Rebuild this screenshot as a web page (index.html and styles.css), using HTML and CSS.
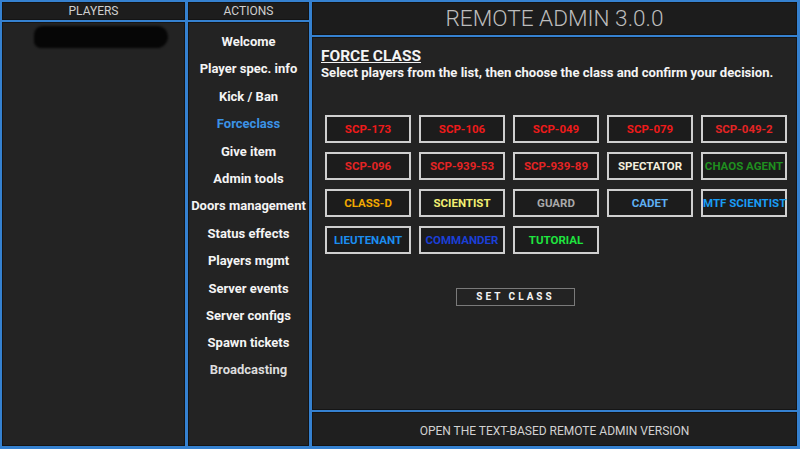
FILE: index.html
```html
<!DOCTYPE html>
<html>
<head>
<meta charset="utf-8">
<link rel="stylesheet" href="styles.css">
</head>
<body>
<div class="app">
  <section class="col players">
    <div class="head">PLAYERS</div>
    <div class="body plist">
      <div class="redacted"></div>
    </div>
  </section>
  <section class="col actions">
    <div class="head">ACTIONS</div>
    <nav class="body alist">
      <div class="act">Welcome</div>
      <div class="act">Player spec. info</div>
      <div class="act">Kick / Ban</div>
      <div class="act active">Forceclass</div>
      <div class="act">Give item</div>
      <div class="act">Admin tools</div>
      <div class="act">Doors management</div>
      <div class="act">Status effects</div>
      <div class="act">Players mgmt</div>
      <div class="act">Server events</div>
      <div class="act">Server configs</div>
      <div class="act">Spawn tickets</div>
      <div class="act dim">Broadcasting</div>
    </nav>
  </section>
  <section class="col main">
    <div class="title">REMOTE ADMIN 3.0.0</div>
    <div class="content">
      <h1 class="h">FORCE CLASS</h1>
      <p class="sub">Select players from the list, then choose the class and confirm your decision.</p>
      <div class="grid">
        <div class="cls red">SCP-173</div>
        <div class="cls red">SCP-106</div>
        <div class="cls red">SCP-049</div>
        <div class="cls red">SCP-079</div>
        <div class="cls red2">SCP-049-2</div>
        <div class="cls red2">SCP-096</div>
        <div class="cls red2">SCP-939-53</div>
        <div class="cls red2">SCP-939-89</div>
        <div class="cls spec">SPECTATOR</div>
        <div class="cls chaos">CHAOS AGENT</div>
        <div class="cls classd">CLASS-D</div>
        <div class="cls sci">SCIENTIST</div>
        <div class="cls guard">GUARD</div>
        <div class="cls cadet">CADET</div>
        <div class="cls mtfsci">MTF SCIENTIST</div>
        <div class="cls lieut">LIEUTENANT</div>
        <div class="cls cmdr">COMMANDER</div>
        <div class="cls tut">TUTORIAL</div>
      </div>
      <div class="setrow"><div class="setbtn">SET CLASS</div></div>
    </div>
    <div class="footer">OPEN THE TEXT-BASED REMOTE ADMIN VERSION</div>
  </section>
</div>
</body>
</html>
```
FILE: styles.css
```css
* { box-sizing: border-box; margin: 0; padding: 0; }
html, body { width: 800px; height: 449px; overflow: hidden; }
body {
  background: #3581d0;
  font-family: Roboto, "Liberation Sans", sans-serif;
  color: #fff;
}
.app {
  display: grid;
  grid-template-columns: 183px 121px 485px;
  column-gap: 3px;
  padding: 2px 3px 3px 2px;
  height: 449px;
}
.col {
  display: flex;
  flex-direction: column;
  gap: 2px;
  min-height: 0;
}
.head {
  height: 18px;
  background: #1d1d1d;
  border: 1px solid #141414;
  color: #cfcfcf;
  font-size: 12px;
  line-height: 16px;
  text-align: center;
}
.body {
  flex: 1;
  background: #232323;
  border: 1px solid #151515;
}
.plist { position: relative; }
.redacted {
  margin: 3px 0 0 31px;
  width: 134px;
  height: 22px;
  background: #060606;
  border-radius: 9px 11px 12px 7px;
  filter: blur(1.2px);
}
.alist {
  padding-top: 5px;
  display: flex;
  flex-direction: column;
}
.act {
  height: 27.4px;
  line-height: 27.4px;
  text-align: center;
  font-weight: 700;
  font-size: 13px;
  color: #f4f4f4;
}
.act.active { color: #3b92e6; }
.act.dim { color: #dcdcdc; height: 25px; line-height: 25px; }
.title {
  height: 33px;
  background: #1c1c1c;
  border: 1px solid #131313;
  color: #bdbdbd;
  font-size: 22.6px;
  font-weight: 300;
  line-height: 31px;
  text-align: center;
}
.content {
  flex: 1;
  background: #232323;
  border: 1px solid #151515;
  padding: 9px 10px 0 8px;
}
.h {
  font-size: 15.5px;
  font-weight: 700;
  text-decoration: underline;
  line-height: 18px;
  color: #f4f4f4;
}
.sub {
  font-size: 13.1px;
  font-weight: 700;
  line-height: 16px;
  color: #f4f4f4;
  white-space: nowrap;
}
.grid {
  margin: 34px 0 0 4px;
  display: grid;
  grid-template-columns: repeat(5, 86px);
  column-gap: 8px;
  row-gap: 9px;
}
.cls {
  height: 28px;
  border: 2px solid #cfcfcf;
  background: #1c1c1c;
  font-size: 11.5px;
  font-weight: 700;
  line-height: 24px;
  text-align: center;
  white-space: nowrap;
}
.red { color: #ee1a1a; }
.red2 { color: #e42424; }
.spec { color: #f3eedc; }
.chaos { color: #1f8f1f; }
.classd { color: #f2a900; }
.sci { color: #f2ee72; }
.guard { color: #a9a9a9; }
.cadet { color: #5fb0f2; }
.mtfsci { color: #1a9cf4; }
.lieut { color: #1b8ef0; }
.cmdr { color: #1b3fd6; }
.tut { color: #1fe43f; }
.setrow {
  margin-top: 34px;
  padding-left: 135px;
}
.setbtn {
  width: 119px;
  height: 18px;
  border: 1px solid #7a7a7a;
  font-size: 10px;
  font-weight: 700;
  letter-spacing: 3px;
  line-height: 16px;
  text-align: center;
  color: #f4f4f4;
}
.footer {
  height: 34px;
  background: #1f1f1f;
  border: 1px solid #141414;
  color: #d2d2d2;
  font-size: 12px;
  line-height: 36px;
  text-align: center;
}
```
